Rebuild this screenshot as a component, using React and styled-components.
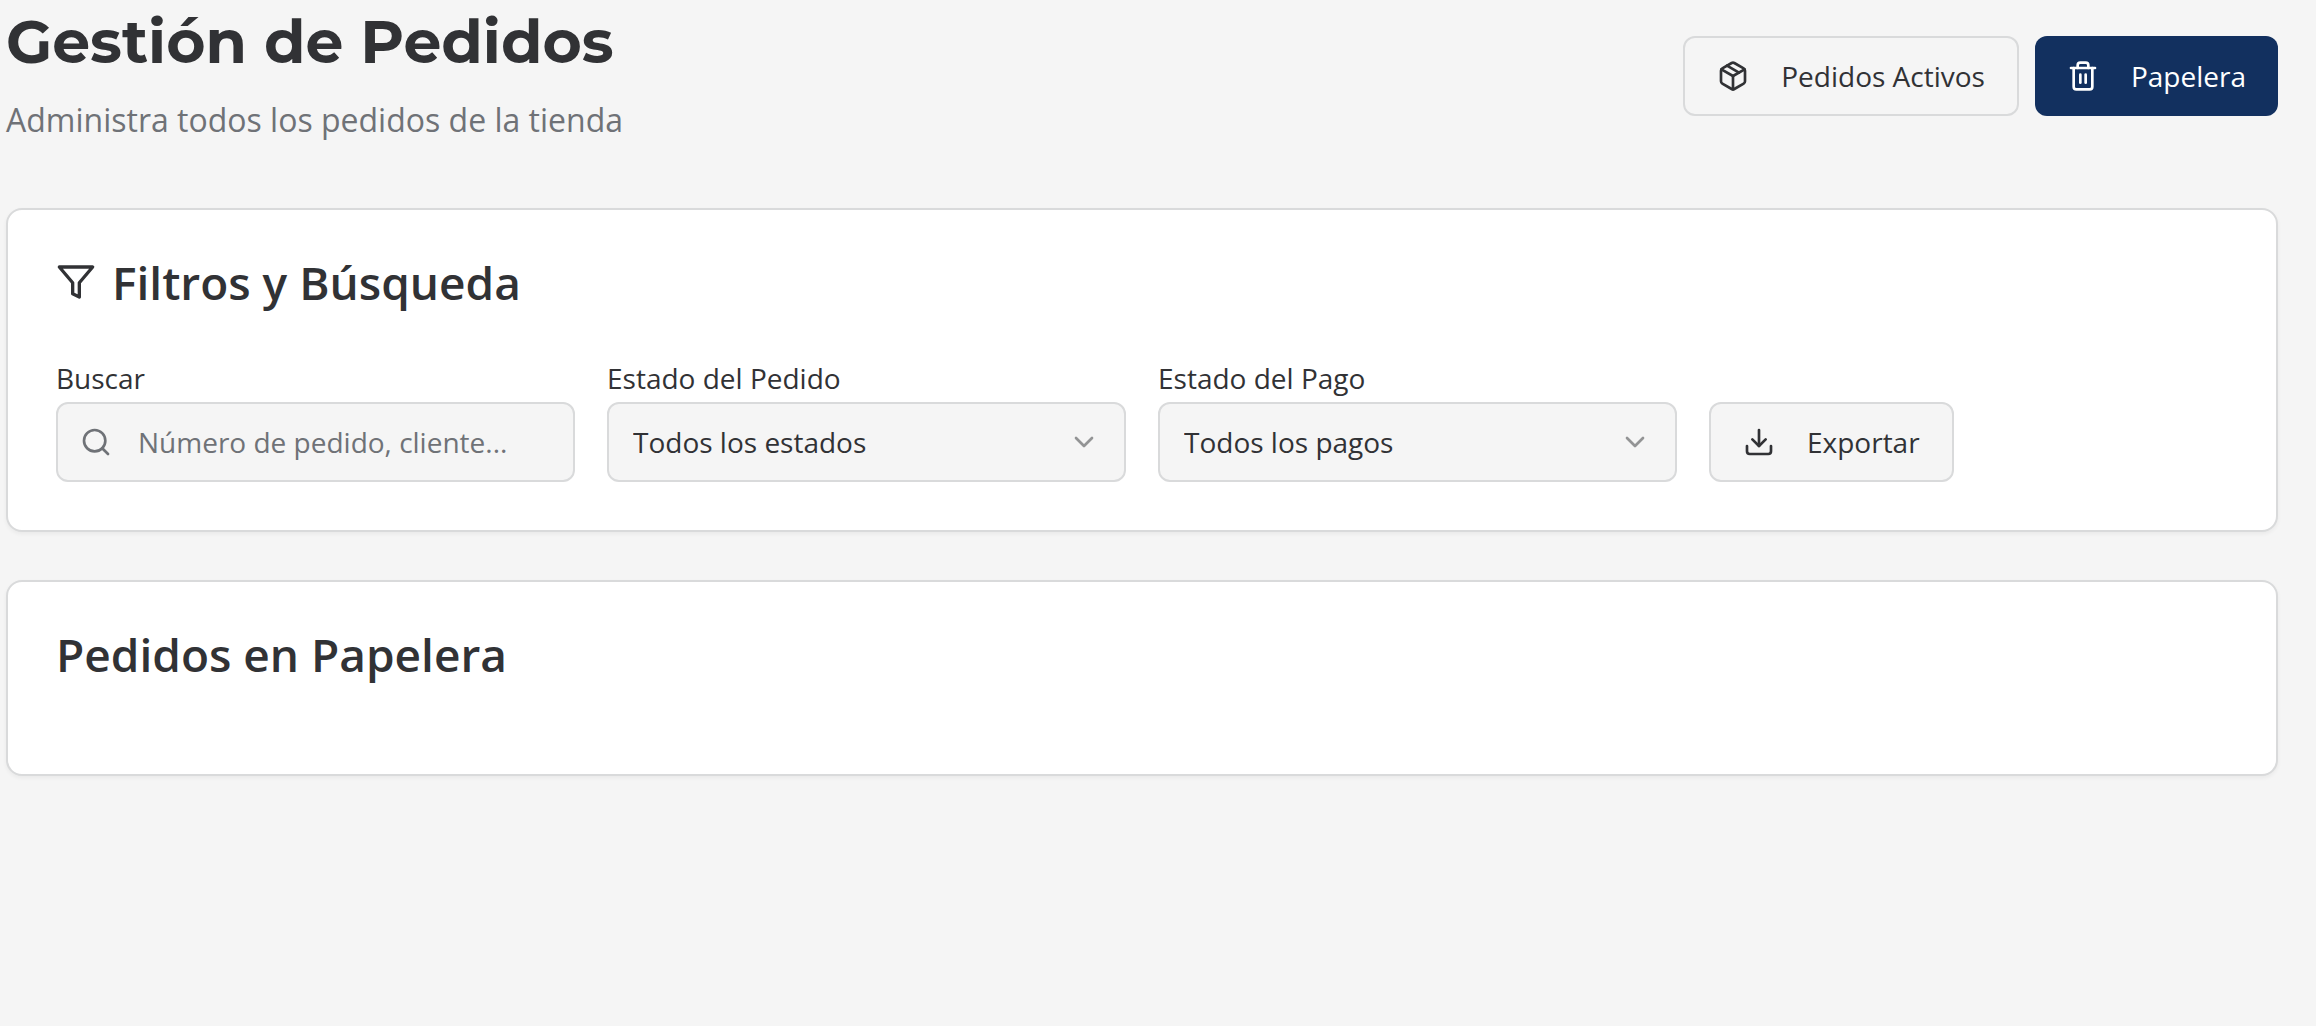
import React from "react";
import styled, { createGlobalStyle, css } from "styled-components";
import { Package, Trash2, Search, ChevronDown, Download } from "lucide-react";

const GlobalStyle = createGlobalStyle`
  *, *::before, *::after { box-sizing: border-box; }
  body {
    margin: 0;
    background: #f5f5f5;
    color: #313235;
    font-family: "Open Sans", "Noto Sans", sans-serif;
    font-size: 28px;
    line-height: 48px;
  }
  button, input, select { font: inherit; color: inherit; }
`;

const Page = styled.main`
  display: flex;
  flex-direction: column;
  gap: 48px;
  padding: 8px 38px 48px 6px;
`;

const Header = styled.header`
  display: flex;
  align-items: center;
  justify-content: space-between;
  margin-bottom: 16px;
`;

const Title = styled.h1`
  margin: 0;
  font-family: Montserrat, Inter, sans-serif;
  font-size: 60px;
  font-weight: 700;
  line-height: 68px;
`;

const Subtitle = styled.p`
  margin: 20px 0 0;
  color: #6f7277;
  font-size: 32px;
  line-height: 48px;
`;

const Actions = styled.div`
  display: flex;
  gap: 16px;
`;

const control = css`
  height: 80px;
  border: 2px solid #d9dadb;
  border-radius: 12px;
  background: #f5f5f5;
`;

const Button = styled.button`
  ${control}
  display: inline-flex;
  align-items: center;
  gap: 32px;
  padding: 0 32px;
  line-height: 40px;
  white-space: nowrap;
  cursor: pointer;
  ${({ $primary }) =>
    $primary &&
    css`
      border: 0;
      background: #12305f;
      color: #ffffff;
    `}
`;

const Card = styled.section`
  padding: 48px;
  border: 2px solid #d9dadb;
  border-radius: 16px;
  background: #ffffff;
  box-shadow: 0 2px 4px rgba(0, 0, 0, 0.05);
`;

const CardTitle = styled.h2`
  display: flex;
  align-items: center;
  gap: 16px;
  margin: 0 0 48px;
  font-size: 46px;
  font-weight: 600;
  line-height: 48px;
`;

const Filters = styled.form`
  display: grid;
  grid-template-columns: repeat(4, minmax(0, 1fr));
  align-items: end;
  gap: 32px;
`;

const Field = styled.div`
  display: flex;
  flex-direction: column;
`;

const ControlWrap = styled.div`
  position: relative;
  display: flex;
`;

const FieldIcon = styled.span`
  position: absolute;
  top: 24px;
  ${({ $side }) => ($side === "left" ? "left: 24px" : "right: 26px")};
  display: flex;
  color: ${({ $side }) => ($side === "left" ? "#6f7277" : "#939495")};
  pointer-events: none;
`;

const SearchInput = styled.input`
  ${control}
  width: 100%;
  padding: 0 24px 0 80px;
  &::placeholder { color: #6f7277; opacity: 1; }
`;

const Select = styled.select`
  ${control}
  width: 100%;
  padding: 0 72px 0 24px;
  appearance: none;
`;

function FilterIcon() {
  return (
    <svg width="40" height="40" viewBox="0 0 24 24" fill="none" stroke="currentColor" strokeWidth="2" strokeLinecap="round" strokeLinejoin="round" aria-hidden="true">
      <polygon points="22 3 2 3 10 12.46 10 19 14 21 14 12.46 22 3" />
    </svg>
  );
}

function SelectField({ id, label, option }) {
  return (
    <Field>
      <label htmlFor={id}>{label}</label>
      <ControlWrap>
        <Select id={id}>
          <option>{option}</option>
        </Select>
        <FieldIcon $side="right"><ChevronDown size={32} /></FieldIcon>
      </ControlWrap>
    </Field>
  );
}

export default function App() {
  return (
    <>
      <GlobalStyle />
      <Page>
        <Header>
          <div>
            <Title>Gestión de Pedidos</Title>
            <Subtitle>Administra todos los pedidos de la tienda</Subtitle>
          </div>
          <Actions>
            <Button type="button"><Package size={32} />Pedidos Activos</Button>
            <Button type="button" $primary><Trash2 size={32} />Papelera</Button>
          </Actions>
        </Header>
        <Card>
          <CardTitle><FilterIcon />Filtros y Búsqueda</CardTitle>
          <Filters>
            <Field>
              <label htmlFor="buscar">Buscar</label>
              <ControlWrap>
                <FieldIcon $side="left"><Search size={32} /></FieldIcon>
                <SearchInput id="buscar" type="text" placeholder="Número de pedido, cliente..." />
              </ControlWrap>
            </Field>
            <SelectField id="estado-pedido" label="Estado del Pedido" option="Todos los estados" />
            <SelectField id="estado-pago" label="Estado del Pago" option="Todos los pagos" />
            <div>
              <Button type="button"><Download size={32} />Exportar</Button>
            </div>
          </Filters>
        </Card>
        <Card>
          <CardTitle>Pedidos en Papelera</CardTitle>
        </Card>
      </Page>
    </>
  );
}
